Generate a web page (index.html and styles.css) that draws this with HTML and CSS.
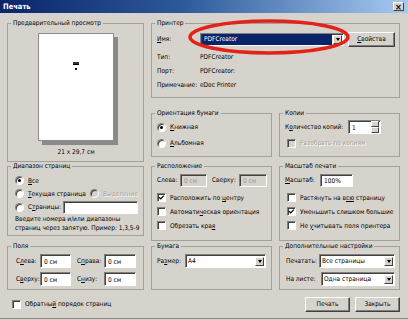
FILE: index.html
```html
<!DOCTYPE html>
<html lang="ru">
<head>
    <meta charset="UTF-8">
    <title>Печать</title>
    <link rel="stylesheet" href="styles.css">
</head>
<body>
    <div class="dialog">
        <div class="titlebar">
            <span>Печать</span>
            <span class="close">×</span>
        </div>

        <div class="content">
            <div class="grid">
                <fieldset class="box preview">
                    <legend>Предварительный просмотр</legend>
                    <div class="page">
                        <span class="page-text"></span>
                        <span class="page-dot"></span>
                    </div>
                    <div class="page-size">21 x 29,7 см</div>
                </fieldset>

                <fieldset class="box printer">
                    <legend>Принтер</legend>
                    <div class="printer-rows">
                        <span><u>И</u>мя:</span>
                        <div class="row">
                            <div class="select active wide"><span class="value">PDFCreator</span><span class="arrow"></span></div>
                            <button class="btn props"><u>С</u>войства</button>
                        </div>
                        <span>Тип:</span><span>PDFCreator</span>
                        <span>Порт:</span><span>PDFCreator:</span>
                        <span>Примечание:</span><span>eDoc Printer</span>
                    </div>
                </fieldset>

                <fieldset class="box orient">
                    <legend>Ориентация бумаги</legend>
                    <div class="stack">
                        <div class="row"><span class="radio checked"></span><span class="txt"><u>К</u>нижная</span></div>
                        <div class="row"><span class="radio"></span><span class="txt"><u>А</u>льбомная</span></div>
                    </div>
                </fieldset>

                <fieldset class="box copies">
                    <legend>Копии</legend>
                    <div class="stack">
                        <div class="row">
                            <span class="lbl w63">К<u>о</u>личество копий:</span>
                            <div class="spin"><span class="value">1</span><span class="spin-btns"><i></i><i></i></span></div>
                        </div>
                        <div class="row indent disabled"><span class="check"></span><span class="txt">Разобрать по копиям</span></div>
                    </div>
                </fieldset>

                <fieldset class="box range">
                    <legend>Диапазон страниц</legend>
                    <div class="range-rows">
                        <div class="row r12"><span class="radio checked"></span><span class="txt"><u>В</u>се</span></div>
                        <div class="row r12">
                            <span class="item w75"><span class="radio"></span><span class="txt"><u>Т</u>екущая страница</span></span>
                            <span class="item disabled"><span class="radio"></span><span class="txt">Выделение</span></span>
                        </div>
                        <div class="row">
                            <span class="radio"></span><span class="txt">С<u>т</u>раницы:</span>
                            <span class="input pages"></span>
                        </div>
                        <p class="hint">Введите номера и/или диапазоны<br>страниц через запятую. Пример: 1,3,5-9</p>
                    </div>
                </fieldset>

                <fieldset class="box place">
                    <legend>Расположение</legend>
                    <div class="row">
                        <span class="lbl w23">Слева:</span><span class="input off w27">0 см</span>
                        <span class="lbl w27 gap5">Сверху:</span><span class="input off w28">0 см</span>
                    </div>
                    <div class="checks">
                        <div class="row"><span class="check on"><svg viewBox="0 0 9 9"><path d="M1.5 4.2 L3.5 6.3 L7.5 2"/></svg></span><span class="txt">Расположить по <u>ц</u>ентру</span></div>
                        <div class="row"><span class="check"></span><span class="txt">Автомати<u>ч</u>еская ориентация</span></div>
                        <div class="row"><span class="check"></span><span class="txt">Обрезать кра<u>я</u></span></div>
                    </div>
                </fieldset>

                <fieldset class="box scale">
                    <legend>Масштаб печати</legend>
                    <div class="row">
                        <span class="lbl w35"><u>М</u>асштаб:</span><span class="input w33">100%</span>
                    </div>
                    <div class="checks">
                        <div class="row indent"><span class="check"></span><span class="txt">Растянуть на в<u>сю</u> страницу</span></div>
                        <div class="row indent"><span class="check on"><svg viewBox="0 0 9 9"><path d="M1.5 4.2 L3.5 6.3 L7.5 2"/></svg></span><span class="txt">Уменьшить слишком большие</span></div>
                        <div class="row indent"><span class="check"></span><span class="txt">Не <u>у</u>читывать поля принтера</span></div>
                    </div>
                </fieldset>

                <fieldset class="box margins">
                    <legend>Поля</legend>
                    <div class="pair-rows">
                        <div class="row">
                            <span class="lbl w24">С<u>л</u>ева:</span><span class="input w31">0 см</span>
                            <span class="lbl w27 gap6">С<u>п</u>рава:</span><span class="input w32">0 см</span>
                        </div>
                        <div class="row">
                            <span class="lbl w24">С<u>в</u>ерху:</span><span class="input w31">0 см</span>
                            <span class="lbl w27 gap6">С<u>н</u>изу:</span><span class="input w32">0 см</span>
                        </div>
                    </div>
                </fieldset>

                <fieldset class="box paper">
                    <legend>Бумага</legend>
                    <div class="pair-rows">
                        <div class="row">
                            <span class="lbl w28">Ра<u>з</u>мер:</span>
                            <div class="select w81"><span class="value">A4</span><span class="arrow"></span></div>
                        </div>
                    </div>
                </fieldset>

                <fieldset class="box extra">
                    <legend>Дополнительные настройки</legend>
                    <div class="pair-rows">
                        <div class="row">
                            <span class="lbl w33">Печатать:</span>
                            <div class="select w80"><span class="value">Все страницы</span><span class="arrow"></span></div>
                        </div>
                        <div class="row">
                            <span class="lbl w35">На листе:</span>
                            <div class="select w78"><span class="value">Одна страница</span><span class="arrow"></span></div>
                        </div>
                    </div>
                </fieldset>
            </div>

            <div class="footer">
                <div class="row"><span class="check"></span><span class="txt">Обратны<u>й</u> порядок страниц</span></div>
                <div class="buttons">
                    <button class="btn">Печать</button>
                    <button class="btn">Закрыть</button>
                </div>
            </div>
        </div>

        <!-- red annotation round the printer name -->
        <svg class="mark" width="164" height="38" viewBox="0 0 164 38">
            <ellipse cx="82" cy="19" rx="79" ry="16" fill="none" stroke="#e2231a" stroke-width="3.5"/>
        </svg>
    </div>
</body>
</html>
```

FILE: styles.css
```css
* {
    margin: 0;
    padding: 0;
    box-sizing: border-box;
}

body {
    font-family: 'DejaVu Sans Condensed', 'Liberation Sans', Arial, sans-serif;
    font-size: 6.5px;
    color: #000;
    background: #d6d3cc;
    width: 408px;
    height: 320px;
    overflow: hidden;
}

u {
    text-decoration: underline;
}

.dialog {
    position: relative;
    width: 408px;
    height: 319px;
    background: #d6d3cc;
    border-bottom: 1px solid #8a8883;
}

.titlebar {
    height: 13px;
    background: linear-gradient(90deg, #0a246a 0%, #2d5a9c 45%, #a6caf0 100%);
    display: flex;
    align-items: center;
    justify-content: space-between;
    padding: 0 4px 0 3px;
    color: white;
    font-weight: bold;
    font-size: 7.5px;
}

.close {
    width: 11px;
    height: 9px;
    background: #d6d3cc;
    color: #000;
    font-size: 9px;
    line-height: 8px;
    text-align: center;
    border: 1px solid;
    border-color: #fff #404040 #404040 #fff;
}

.content {
    padding: 5px 8px 0 7px;
}

.grid {
    display: grid;
    grid-template-columns: 137px 121px 121px;
    grid-template-rows: 90px 53px 80px 49px;
    column-gap: 7px;
}

.box {
    border: 1px solid #a3a09a;
    padding: 0 4px 0 5px;
    min-width: 0;
}

.box legend {
    padding: 0 2px;
    margin-left: -2px;
    line-height: 10px;
}

.row {
    display: flex;
    align-items: center;
    height: 14px;
    white-space: nowrap;
}

.txt {
    margin-left: 4px;
}

.indent {
    padding-left: 2px;
}

.disabled {
    color: #a3a19c;
    text-shadow: 1px 1px 0 #fff;
}

/* preview */
.preview {
    grid-row: 1 / 3;
    height: 144px;
}

.page {
    width: 76px;
    height: 108px;
    margin: 5px auto 0;
    background: white;
    border: 1px solid #8c8c8c;
    box-shadow: 4px 4px 0 #8a8a8a;
    display: flex;
    flex-direction: column;
    align-items: center;
    padding-top: 28px;
}

.page-text {
    width: 6px;
    height: 3px;
    background: #333;
    border-bottom: 1px solid #000;
}

.page-dot {
    width: 2px;
    height: 2px;
    margin-top: 3px;
    background: #111;
}

.page-size {
    text-align: center;
    margin-top: 6px;
    line-height: 10px;
}

/* printer */
.printer {
    grid-column: 2 / 4;
    height: 80px;
}

.printer-rows {
    display: grid;
    grid-template-columns: 43px 1fr;
    grid-template-rows: 22px 14px 14px 14px;
    align-items: center;
}

.printer-rows .row {
    height: 22px;
}

.wide {
    width: 144px;
}

.props {
    width: 47px;
    height: 15px;
    margin-left: 4px;
}

/* shared controls */
.select,
.input,
.spin {
    display: flex;
    align-items: center;
    height: 13px;
    background: white;
    border: 1px solid;
    border-color: #808080 #fff #fff #808080;
    box-shadow: inset 1px 1px 0 #404040;
    overflow: hidden;
}

.input {
    padding: 1px 0 0 3px;
}

.input.off {
    background: #d6d3cc;
    color: #9b9993;
}

.select .value {
    flex: 1;
    padding: 1px 0 0 2px;
    height: 100%;
    line-height: 10px;
}

.select.active .value {
    background: #0a246a;
    color: white;
    margin: 1px 0 1px 1px;
    line-height: 9px;
}

.arrow {
    width: 9px;
    height: 9px;
    margin: 0 1px 0 1px;
    background: #d6d3cc;
    border: 1px solid;
    border-color: #fff #404040 #404040 #fff;
    position: relative;
}

.arrow::after {
    content: "";
    position: absolute;
    left: 1.5px;
    top: 2.5px;
    border-left: 2.5px solid transparent;
    border-right: 2.5px solid transparent;
    border-top: 3px solid #000;
}

.radio {
    width: 9px;
    height: 9px;
    flex: none;
    border-radius: 50%;
    background: white;
    border: 1px solid;
    border-color: #808080 #fff #fff #808080;
    box-shadow: inset 1px 1px 0 #404040;
    position: relative;
}

.radio.checked::after {
    content: "";
    position: absolute;
    left: 2px;
    top: 2px;
    width: 3px;
    height: 3px;
    border-radius: 50%;
    background: #000;
}

.disabled .radio,
.disabled .check {
    background: #d6d3cc;
}

.check {
    width: 9px;
    height: 9px;
    flex: none;
    background: white;
    border: 1px solid;
    border-color: #808080 #fff #fff #808080;
    box-shadow: inset 1px 1px 0 #404040;
    display: flex;
}

.check svg {
    width: 7px;
    height: 7px;
}

.check path {
    fill: none;
    stroke: #000;
    stroke-width: 1.6;
}

.btn {
    font-family: inherit;
    font-size: 6.5px;
    background: #d6d3cc;
    border: 1px solid;
    border-color: #fff #404040 #404040 #fff;
    box-shadow: inset -1px -1px 0 #808080;
    color: #000;
}

/* orientation / copies */
.orient,
.copies {
    height: 49px;
}

.stack {
    display: flex;
    flex-direction: column;
    gap: 2px;
    padding-top: 2px;
}

.lbl {
    flex: none;
}

.w23 { width: 23px; }
.w24 { width: 24px; }
.w27 { width: 27px; }
.w28 { width: 28px; }
.w31 { width: 31px; }
.w32 { width: 32px; }
.w33 { width: 33px; }
.w35 { width: 35px; }
.w63 { width: 63px; }
.w75 { width: 75px; }
.w78 { width: 78px; }
.w80 { width: 80px; }
.w81 { width: 81px; }
.gap5 { margin-left: 5px; }
.gap6 { margin-left: 6px; }

.spin {
    width: 33px;
    height: 14px;
}

.spin .value {
    flex: 1;
    padding: 1px 0 0 3px;
}

.spin-btns {
    display: flex;
    flex-direction: column;
    width: 8px;
    height: 100%;
    margin: 1px 1px 1px 0;
}

.spin-btns i {
    flex: 1;
    background: #d6d3cc;
    border: 1px solid;
    border-color: #fff #404040 #404040 #fff;
}

/* page range */
.range {
    height: 75px;
}

.range-rows {
    padding: 3px 0 0 2px;
}

.r12 {
    height: 13px;
}

.item {
    display: flex;
    align-items: center;
}

.pages {
    width: 75px;
    height: 13px;
    margin-left: auto;
    margin-right: 1px;
}

.hint {
    margin-top: 1px;
    line-height: 9px;
    white-space: nowrap;
}

/* placement / scale */
.place,
.scale {
    height: 80px;
}

.place > .row,
.scale > .row {
    margin-top: 2px;
}

.checks {
    display: flex;
    flex-direction: column;
    gap: 1px;
    margin-top: 4px;
}

.checks .row {
    height: 13px;
}

/* bottom groups */
.margins,
.paper,
.extra {
    height: 49px;
}

.pair-rows {
    display: flex;
    flex-direction: column;
    gap: 4px;
    padding-top: 3px;
}

.margins .pair-rows {
    padding-left: 3px;
}

.pair-rows .input,
.pair-rows .select {
    height: 14px;
}

.extra .pair-rows {
    padding-left: 1px;
}

/* footer */
.footer {
    height: 28px;
    display: flex;
    align-items: center;
    justify-content: space-between;
    padding-left: 5px;
}

.buttons {
    display: flex;
    gap: 5px;
}

.buttons .btn {
    width: 45px;
    height: 15px;
}

.mark {
    position: absolute;
    left: 187px;
    top: 18px;
}
```
